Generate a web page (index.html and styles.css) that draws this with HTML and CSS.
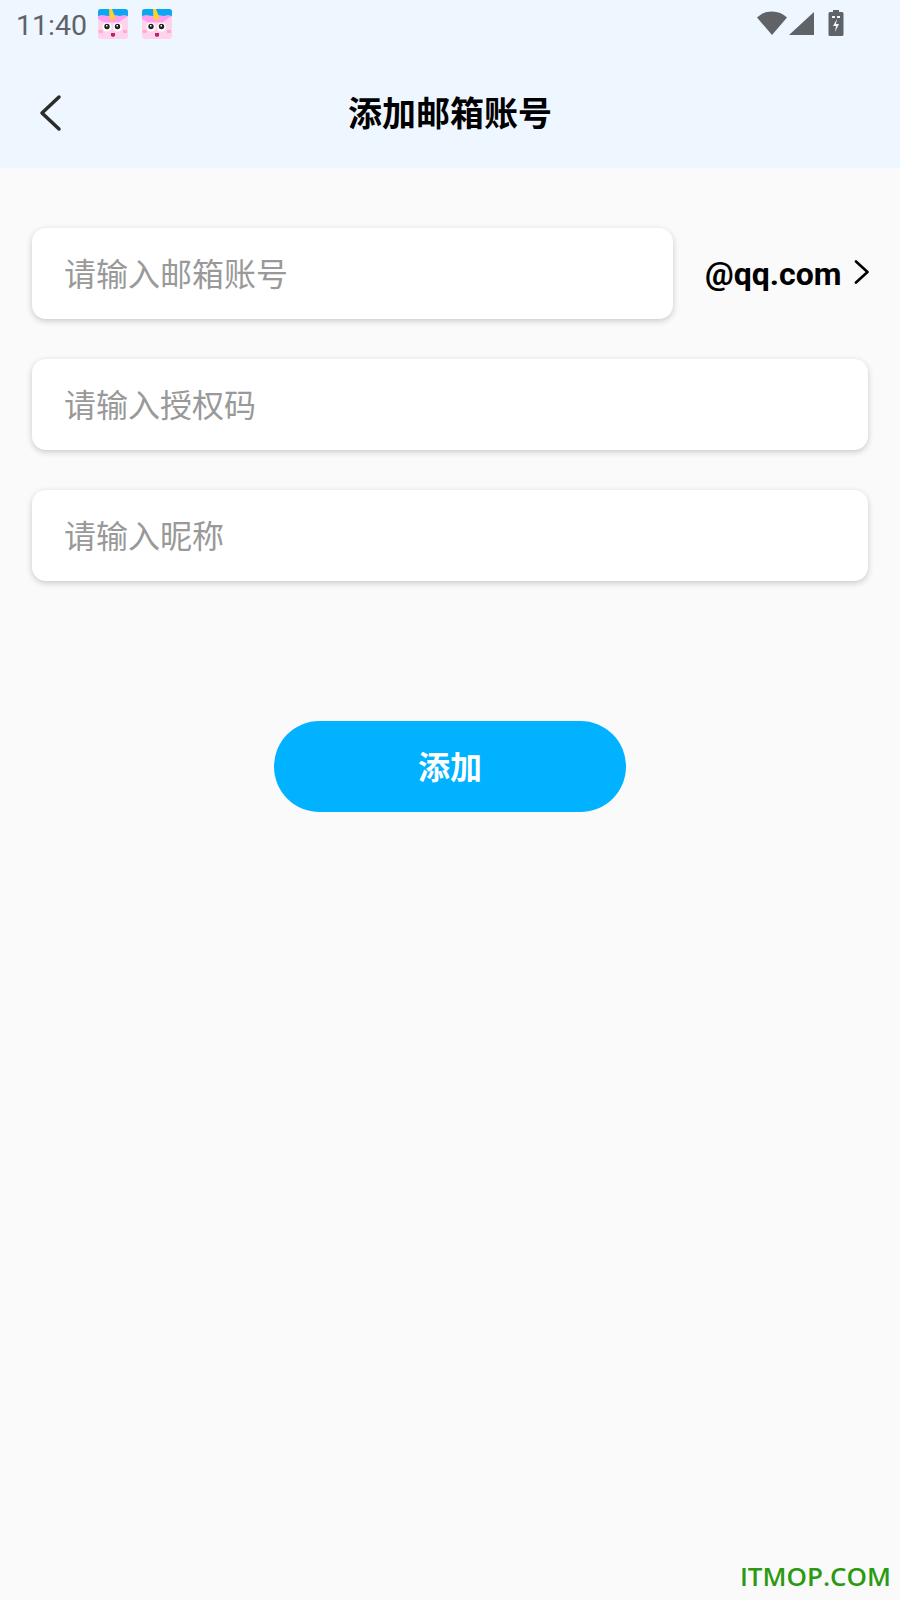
FILE: index.html
```html
<!DOCTYPE html>
<html lang="zh-CN">
<head>
  <meta charset="UTF-8">
  <title>添加邮箱账号</title>
  <link rel="stylesheet" href="styles.css">
</head>
<body>

<svg class="defs" width="0" height="0">
  <symbol id="unicorn" viewBox="0 0 30 30">
    <rect width="30" height="30" rx="3" fill="#ffd3ea"/>
    <path d="M0 3a3 3 0 0 1 3-3h24a3 3 0 0 1 3 3v4c-4 2-7 5-10 7-4-1-9-1-12 0C5 13 2 11 0 10z" fill="#ff9df0"/>
    <path d="M0 3a3 3 0 0 1 3-3h24a3 3 0 0 1 3 3v4l-4-1-4 1-6-1-6 1-6-1-4 1z" fill="#08a8f4"/>
    <path d="M11 0h3l3.500 9-3 2.500-3-2z" fill="#ffd02e"/>
    <circle cx="9" cy="18" r="4.500" fill="#fff"/>
    <circle cx="19.500" cy="18" r="4.500" fill="#fff"/>
    <circle cx="9" cy="17.500" r="2.700" fill="#222"/>
    <circle cx="19.500" cy="17.500" r="2.700" fill="#222"/>
    <rect x="8" y="16" width="1.500" height="1.500" fill="#fff"/>
    <rect x="18.500" y="16" width="1.500" height="1.500" fill="#fff"/>
    <rect x="0.500" y="21" width="4" height="3" fill="#ffa9d4"/>
    <rect x="25" y="21" width="4" height="3" fill="#ffa9d4"/>
    <path d="M13 24h4v3l-2 1-2-1z" fill="#c02070"/>
  </symbol>
</svg>

<div class="top">
  <div class="status">
    <span class="time">11:40</span>
    <svg class="app-icon"><use href="#unicorn"/></svg>
    <svg class="app-icon"><use href="#unicorn"/></svg>
    <div class="status-right">
      <svg width="30" height="26" viewBox="0 0 30 26"><path d="M0 7.500C4 3.500 9 1.500 15 1.500s11 2 15 6L15 25z" fill="#5f6368"/></svg>
      <svg width="25" height="26" viewBox="0 0 25 26"><path d="M25 2v23H0z" fill="#5f6368"/></svg>
      <svg width="16" height="26" viewBox="0 0 16 26"><path d="M5 0h6v2h3a1.500 1.500 0 0 1 1.500 1.500v21A1.500 1.500 0 0 1 14 26H2A1.500 1.500 0 0 1 .5 24.500v-21A1.500 1.500 0 0 1 2 2h3z" fill="#5f6368"/><path d="M4 6h3v2H4zM9 6h3v2H9zM9 9l-4 7h3l-1 6 4-8H8z" fill="#f0f6ff"/></svg>
    </div>
  </div>
  <div class="nav">
    <svg class="back" width="24" height="38" viewBox="0 0 24 38"><path d="M21 3 4 19l17 16" fill="none" stroke="#2b2b2b" stroke-width="3.500" stroke-linecap="round" stroke-linejoin="round"/></svg>
    <h1>添加邮箱账号</h1>
  </div>
</div>

<div class="form">
  <div class="row">
    <div class="field field-short">请输入邮箱账号</div>
    <div class="domain">
      <span>@qq.com</span>
      <svg class="chevron" width="16" height="24" viewBox="0 0 16 24"><path d="M2 1.500 13.500 12 2 22.500" fill="none" stroke="#000" stroke-width="2.600" stroke-linecap="round" stroke-linejoin="round"/></svg>
    </div>
  </div>
  <div class="field">请输入授权码</div>
  <div class="field">请输入昵称</div>
  <button class="add-btn">添加</button>
</div>

<div class="watermark">ITMOP.COM</div>

</body>
</html>
```

FILE: styles.css
```css
html, body {
  height: 100%;
}
body {
  margin: 0;
  background: #fafafa;
  font-family: Roboto, "Noto Sans CJK SC", sans-serif;
  display: flex;
  flex-direction: column;
}
.defs {
  display: none;
}
.top {
  background: #eef6ff;
  height: 168px;
}
.status {
  display: flex;
  align-items: center;
  height: 50px;
  padding-left: 16px;
}
.time {
  font-size: 28.500px;
  color: #5f6368;
  margin-right: 11px;
}
.app-icon {
  width: 30px;
  height: 30px;
  margin-right: 14px;
  margin-top: -2px;
}
.status-right {
  margin-left: auto;
  margin-right: 56px;
  display: flex;
  align-items: center;
  margin-top: -4px;
}
.status-right svg {
  margin-left: 2px;
}
.status-right svg:last-child {
  margin-left: 14px;
}
.nav {
  position: relative;
  height: 64px;
  margin-top: 29px;
  display: flex;
  align-items: center;
  justify-content: center;
}
.nav h1 {
  margin: 0;
  font-size: 34px;
  font-weight: 700;
  color: #000;
}
.back {
  position: absolute;
  left: 38px;
  top: 15px;
}
.form {
  padding: 60px 32px 0;
  display: flex;
  flex-direction: column;
  gap: 40px;
}
.row {
  display: flex;
  align-items: center;
}
.field {
  box-sizing: border-box;
  height: 91px;
  background: #fff;
  border-radius: 14px;
  box-shadow: 0 2px 6px rgba(0, 0, 0, 0.2);
  padding: 0 0 4px 32px;
  display: flex;
  align-items: center;
  font-size: 32px;
  color: #999;
}
.field-short {
  flex: none;
  width: 641px;
}
.domain {
  flex: none;
  margin-left: 32px;
  display: flex;
  align-items: center;
  gap: 12px;
  font-size: 32px;
  font-weight: 700;
  color: #000;
}
.chevron {
  margin-top: -3px;
}
.add-btn {
  width: 352px;
  height: 91px;
  margin: 100px auto 0;
  padding: 0 0 4px;
  border: none;
  border-radius: 46px;
  background: #00b2ff;
  color: #fff;
  font-family: inherit;
  font-size: 32px;
  font-weight: 700;
}
.watermark {
  margin-top: auto;
  padding: 0 9px 6px 0;
  text-align: right;
  font-family: "Open Sans", sans-serif;
  font-size: 26px;
  font-weight: 600;
  color: #2b9a12;
}
```
